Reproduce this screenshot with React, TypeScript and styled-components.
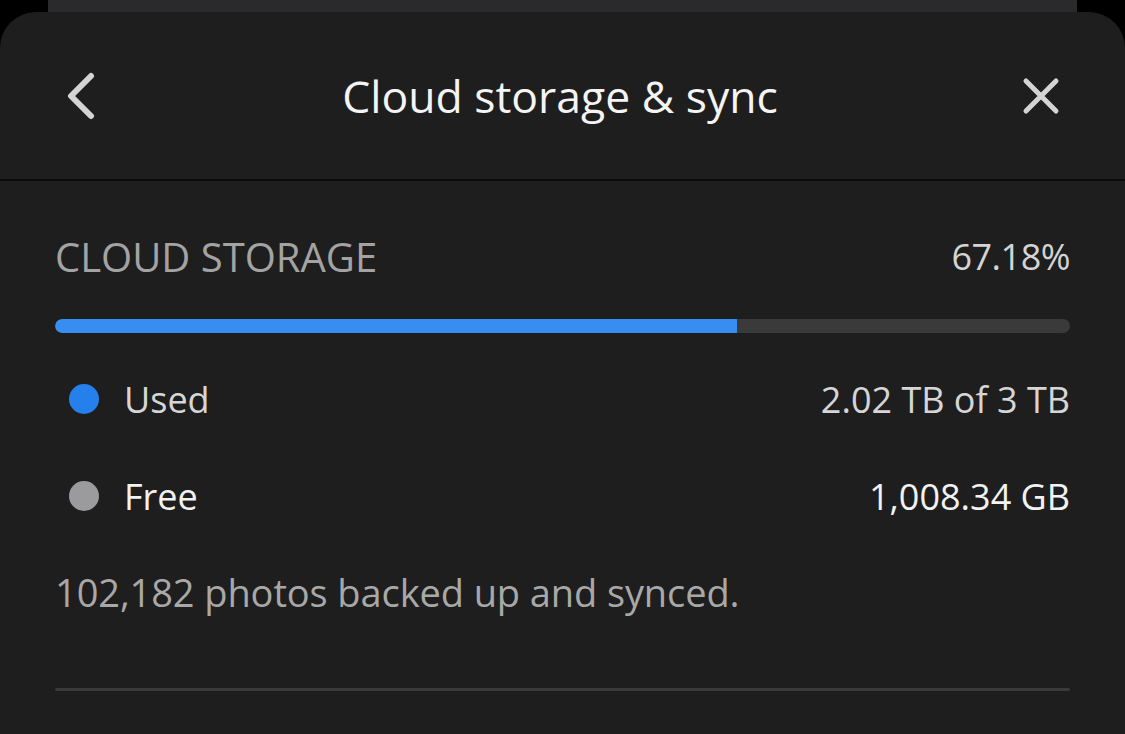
import styled, { createGlobalStyle } from "styled-components";

const GlobalStyle = createGlobalStyle`
  html, body {
    margin: 0;
    padding: 0;
    background: #000;
  }
  body {
    font-family: "Open Sans", "Noto Sans", sans-serif;
    -webkit-font-smoothing: antialiased;
  }
`;

const USED_PERCENT = 67.18;

const legend = [
  { label: "Used", value: "2.02 TB of 3 TB", dot: "#2680eb", tone: "#d6d6d6" },
  { label: "Free", value: "1,008.34 GB", dot: "#9b9b9d", tone: "#f2f2f2" },
];

const App = () => {
  return (
    <>
      <GlobalStyle />
      <Page>
        <BackSheet />
        <Sheet>
          <Header>
            <IconButton aria-label="Back">
              <svg width="36" height="48" viewBox="0 0 36 48" fill="none">
                <path
                  d="M29 4 L9 24 L29 44"
                  stroke="#d4d4d4"
                  strokeWidth="6"
                  strokeLinecap="round"
                  strokeLinejoin="round"
                />
              </svg>
            </IconButton>
            <Title>Cloud storage &amp; sync</Title>
            <IconButton aria-label="Close">
              <svg width="38" height="38" viewBox="0 0 38 38" fill="none">
                <path
                  d="M4 4 L34 34 M34 4 L4 34"
                  stroke="#d4d4d4"
                  strokeWidth="5"
                  strokeLinecap="round"
                />
              </svg>
            </IconButton>
          </Header>
          <Content>
            <Row>
              <SectionLabel>CLOUD STORAGE</SectionLabel>
              <Percent>{USED_PERCENT}%</Percent>
            </Row>
            <Track>
              <Fill style={{ width: `${USED_PERCENT}%` }} />
            </Track>
            <Legend>
              {legend.map((item) => (
                <LegendRow key={item.label}>
                  <LegendName>
                    <Dot color={item.dot} />
                    <LegendText tone={item.tone}>{item.label}</LegendText>
                  </LegendName>
                  <LegendText tone={item.tone}>{item.value}</LegendText>
                </LegendRow>
              ))}
            </Legend>
            <Note>102,182 photos backed up and synced.</Note>
            <Divider />
          </Content>
        </Sheet>
      </Page>
    </>
  );
};

export default App;

const Page = styled.div`
  width: 1125px;
  height: 734px;
  overflow: hidden;
  background: #000;
  display: flex;
  flex-direction: column;
`;

const BackSheet = styled.div`
  height: 12px;
  margin: 0 48px;
  background: #2a2a2c;
  flex-shrink: 0;
`;

const Sheet = styled.div`
  flex: 1;
  background: #1e1e1e;
  border-radius: 36px 36px 0 0;
  display: flex;
  flex-direction: column;
`;

const Header = styled.div`
  height: 167px;
  display: flex;
  align-items: center;
  justify-content: space-between;
  padding: 0 65px 0 62px;
  border-bottom: 2px solid #0b0b0b;
`;

const IconButton = styled.button`
  background: none;
  border: none;
  padding: 0;
  display: flex;
  align-items: center;
  justify-content: center;
  cursor: pointer;
`;

const Title = styled.h1`
  margin: 0;
  font-size: 44.5px;
  font-weight: 400;
  color: #f4f4f4;
  letter-spacing: 0;
`;

const Content = styled.div`
  padding: 0 55px;
  display: flex;
  flex-direction: column;
`;

const Row = styled.div`
  display: flex;
  justify-content: space-between;
  align-items: center;
  margin-top: 48px;
`;

const SectionLabel = styled.span`
  font-size: 40px;
  color: #a3a3a3;
`;

const Percent = styled.span`
  font-size: 36px;
  color: #d4d4d4;
  letter-spacing: -0.5px;
`;

const Track = styled.div`
  margin-top: 35px;
  height: 14px;
  border-radius: 7px;
  background: #3a3a3a;
  overflow: hidden;
`;

const Fill = styled.div`
  height: 100%;
  background: #378ef0;
  border-radius: 7px 0 0 7px;
`;

const Legend = styled.div`
  display: flex;
  flex-direction: column;
  margin-top: 38px;
  gap: 41px;
`;

const LegendRow = styled.div`
  display: flex;
  justify-content: space-between;
  align-items: center;
  height: 56px;
`;

const LegendName = styled.div`
  display: flex;
  align-items: center;
  gap: 25px;
  padding-left: 14px;
`;

const Dot = styled.span<{ color: string }>`
  width: 30px;
  height: 30px;
  border-radius: 50%;
  background: ${(p) => p.color};
`;

const LegendText = styled.span<{ tone: string }>`
  font-size: 36px;
  color: ${(p) => p.tone};
`;

const Note = styled.p`
  margin: 42px 0 0;
  font-size: 38px;
  color: #a8a8a8;
  letter-spacing: -0.1px;
`;

const Divider = styled.div`
  margin-top: 70px;
  height: 3px;
  border-radius: 2px;
  background: #3a3a3a;
`;
